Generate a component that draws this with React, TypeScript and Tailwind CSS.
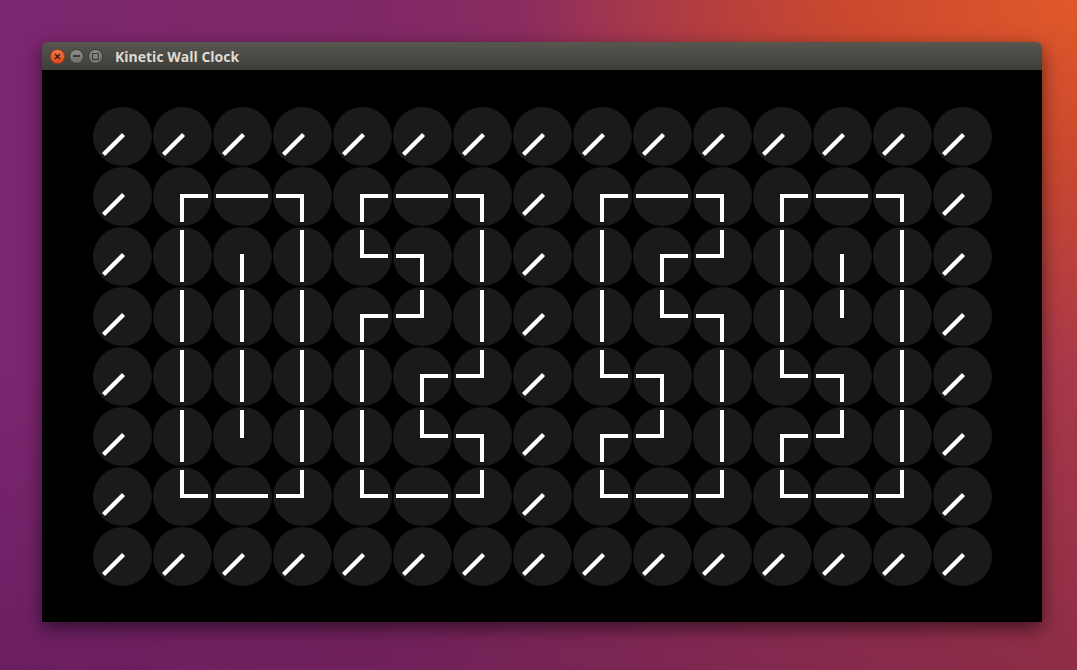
type Dir = "u" | "d" | "l" | "r" | "dl";
type Cell = [Dir, Dir];

const VEC: Record<Dir, [number, number]> = {
    u: [0, -1],
    d: [0, 1],
    l: [-1, 0],
    r: [1, 0],
    dl: [-Math.SQRT1_2, Math.SQRT1_2],
};

// 3x6 digit shapes, each cell holds the direction of its two hands
const DIGITS: Record<string, Cell[][]> = {
    "0": [
        [["r", "d"], ["l", "r"], ["l", "d"]],
        [["u", "d"], ["d", "d"], ["u", "d"]],
        [["u", "d"], ["u", "d"], ["u", "d"]],
        [["u", "d"], ["u", "d"], ["u", "d"]],
        [["u", "d"], ["u", "u"], ["u", "d"]],
        [["u", "r"], ["l", "r"], ["u", "l"]],
    ],
    "2": [
        [["r", "d"], ["l", "r"], ["l", "d"]],
        [["u", "r"], ["l", "d"], ["u", "d"]],
        [["r", "d"], ["l", "u"], ["u", "d"]],
        [["u", "d"], ["r", "d"], ["l", "u"]],
        [["u", "d"], ["u", "r"], ["l", "d"]],
        [["u", "r"], ["l", "r"], ["l", "u"]],
    ],
    "5": [
        [["r", "d"], ["l", "r"], ["l", "d"]],
        [["u", "d"], ["r", "d"], ["l", "u"]],
        [["u", "d"], ["u", "r"], ["l", "d"]],
        [["u", "r"], ["l", "d"], ["u", "d"]],
        [["r", "d"], ["l", "u"], ["u", "d"]],
        [["u", "r"], ["l", "r"], ["l", "u"]],
    ],
    "9": [
        [["r", "d"], ["l", "r"], ["l", "d"]],
        [["u", "d"], ["d", "d"], ["u", "d"]],
        [["u", "d"], ["u", "u"], ["u", "d"]],
        [["u", "r"], ["l", "d"], ["u", "d"]],
        [["r", "d"], ["l", "u"], ["u", "d"]],
        [["u", "r"], ["l", "r"], ["l", "u"]],
    ],
};

const IDLE: Cell = ["dl", "dl"];

// Build the 15x8 board: idle border, four digits at columns 1, 4, 8, 11
const buildBoard = (time: string): Cell[][] => {
    const board: Cell[][] = Array.from({ length: 8 }, () =>
        Array.from({ length: 15 }, () => IDLE)
    );
    const starts = [1, 4, 8, 11];
    time.split("").forEach((ch, i) => {
        const digit = DIGITS[ch];
        digit.forEach((row, r) =>
            row.forEach((cell, c) => {
                board[r + 1][starts[i] + c] = cell;
            })
        );
    });
    return board;
};

const Clock = ({ cell }: { cell: Cell }) => (
    <div className="relative flex h-[60px] w-[60px] items-center justify-center">
        <div className="h-[59px] w-[59px] rounded-full bg-[#1a1a1a]" />
        <svg
            width="60"
            height="60"
            viewBox="0 0 60 60"
            className="absolute left-0 top-0"
        >
            {cell.map((dir, i) => {
                const [dx, dy] = VEC[dir];
                return (
                    <line
                        key={i}
                        x1={30}
                        y1={30}
                        x2={30 + dx * 24}
                        y2={30 + dy * 24}
                        stroke="#ffffff"
                        strokeWidth={4}
                        strokeLinecap="square"
                    />
                );
            })}
        </svg>
    </div>
);

const TitleButton = ({ kind }: { kind: "close" | "min" | "max" }) => {
    if (kind === "close") {
        return (
            <div className="flex h-[15px] w-[15px] items-center justify-center rounded-full border border-[#b13a17] bg-[linear-gradient(#f37a52,#e04a1e)]">
                <svg width="7" height="7" viewBox="0 0 7 7">
                    <path d="M1 1L6 6M6 1L1 6" stroke="#3b1408" strokeWidth="1.3" />
                </svg>
            </div>
        );
    }
    return (
        <div className="flex h-[15px] w-[15px] items-center justify-center rounded-full border border-[#3a3935] bg-[linear-gradient(#8f8d87,#6f6e69)]">
            {kind === "min" ? (
                <div className="h-[1.5px] w-[7px] bg-[#3a3935]" />
            ) : (
                <div className="h-[7px] w-[7px] border border-[#3a3935]" />
            )}
        </div>
    );
};

export default function App() {
    const board = buildBoard("0259");

    return (
        <div className="h-[670px] w-[1077px] overflow-hidden bg-[radial-gradient(ellipse_65%_70%_at_100%_0%,#e0582a_0%,#c8472f_35%,rgba(180,60,60,0)_80%),linear-gradient(180deg,rgba(0,0,0,0)_55%,rgba(50,5,50,0.22)_100%),linear-gradient(90deg,#7b2670_0%,#802866_35%,#983257_70%,#a8384a_100%)] pl-[42px] pt-[42px]">
            <div className="w-[1000px] overflow-hidden rounded-t-[6px] shadow-[0_6px_18px_rgba(0,0,0,0.55)]">
                <div className="flex h-[28px] items-center bg-[linear-gradient(#57564f,#3e3d39)] pl-[8px]">
                    <div className="flex gap-[4px]">
                        <TitleButton kind="close" />
                        <TitleButton kind="min" />
                        <TitleButton kind="max" />
                    </div>
                    <span className="ml-[12px] font-['Open_Sans',sans-serif] text-[14px] font-bold text-[#dfdbd2]">
                        Kinetic Wall Clock
                    </span>
                </div>
                <div className="flex h-[552px] items-center justify-center bg-black">
                    <div className="grid grid-cols-[repeat(15,60px)]">
                        {board.flatMap((row, r) =>
                            row.map((cell, c) => (
                                <Clock key={`${r}-${c}`} cell={cell} />
                            ))
                        )}
                    </div>
                </div>
            </div>
        </div>
    );
}
